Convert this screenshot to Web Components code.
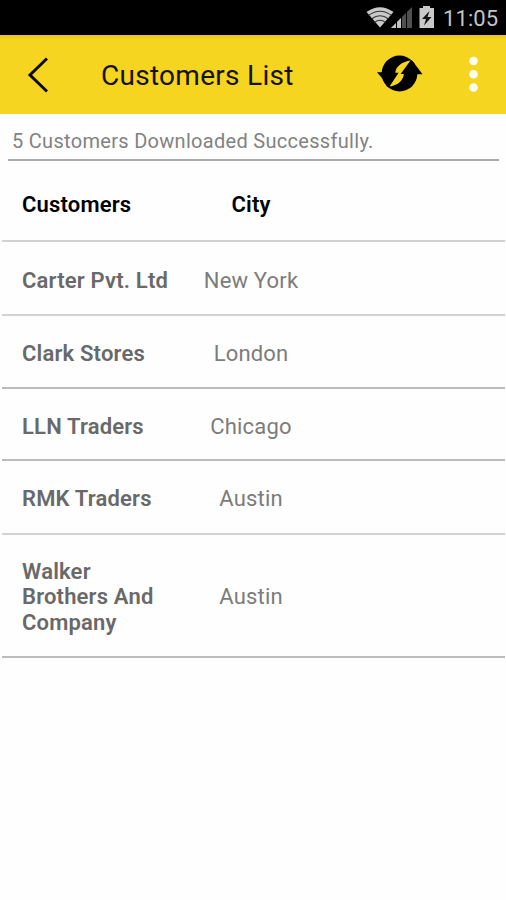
<!DOCTYPE html>
<html lang="en">
<head>
<meta charset="utf-8">
<title>Customers List</title>
<style>
html,body{margin:0;height:100%;background:#fefefe;font-family:Roboto,"Liberation Sans",sans-serif}
</style>
</head>
<body>
<customers-app></customers-app>
<script>
function define(name, html) {
  const t = document.createElement('template');
  t.innerHTML = html;
  customElements.define(name, class extends HTMLElement {
    constructor() {
      super();
      this.attachShadow({ mode: 'open' }).append(t.content.cloneNode(true));
    }
  });
}
define('status-bar', `
<style>
:host{display:flex;height:35px;background:#000;box-sizing:border-box;padding-right:8px;justify-content:flex-end;align-items:flex-start;color:#c4c4c4}
svg{display:block;flex:none}
span{font-size:22px;line-height:26px;margin:6px 0 0 7px;width:55px;white-space:nowrap;letter-spacing:.1px}
</style>
<svg width="70" height="35" viewBox="0 0 70 35">
  <path d="M.5 12Q14 2.500 27.500 12L14 27.500Z" fill="#c9c9c9"/>
  <g fill="none" stroke="#333" stroke-width="1.100"><path d="M2.500 15.400Q14 7 25.500 15.400"/><path d="M5.500 19Q14 12.500 22.500 19"/><path d="M8.500 22.400Q14 18 19.500 22.400"/></g>
  <path d="M25 28L46 7V28Z" fill="#505050"/>
  <path d="M25 28L35 18V28Z" fill="#c4c4c4"/>
  <g stroke="#000" stroke-width="1"><path d="M30.500 20V28M35.500 14V28M40.500 9V28"/></g>
  <path d="M53.500 8H57V6H64V8H68V28H53.500Z" fill="#c9c9c9"/>
  <path d="M63.500 11L56 19H60L58 25.500L65.500 17H61.500Z" fill="#111"/>
</svg>
<span>11:05</span>`);
define('app-bar', `
<style>
:host{display:flex;height:79px;background:linear-gradient(#e6c61b,#f5d51f 5px,#f5d51f);align-items:center;box-sizing:border-box;padding:0 27px}
svg{display:block;flex:none}
h1{margin:0 0 0 53px;font-weight:400;font-size:28px;line-height:34px;letter-spacing:.28px;color:#151200;width:275px;white-space:nowrap;position:relative;top:1px}
.dots{margin-left:46px}
</style>
<svg width="21" height="39" viewBox="0 0 21 39"><path d="M20 3.500L3 20L20 36.500" fill="none" stroke="#0c0a00" stroke-width="3"/></svg>
<h1><slot></slot></h1>
<svg width="47" height="39" viewBox="0 0 47 39">
  <circle cx="23.500" cy="18.500" r="17.900"/>
  <path d="M1 17.300H23L12 30Z"/>
  <path d="M46.500 19.300H25L36.500 6Z"/>
  <path d="M34.500 5.500C26.500 6.500 20 11 19.300 17.700H22.600L13.500 31.500C21.500 30.500 27 26 27.900 19H24.600Z" fill="#f5d51f"/>
</svg>
<svg class="dots" width="10" height="39" viewBox="0 0 10 39"><g fill="#fffef2"><circle cx="4.500" cy="6" r="4.300"/><circle cx="4.500" cy="19.200" r="4.300"/><circle cx="4.500" cy="32.500" r="4.300"/></g></svg>`);
define('status-note', `
<style>
:host{display:block;box-sizing:border-box;height:47px;margin:0 7px 0 8px;padding:0 0 0 4px;border-bottom:2px solid #aaa;color:#828282;font-size:20px;line-height:55px;letter-spacing:.3px;white-space:nowrap}
</style><slot></slot>`);
define('customer-row', `
<style>
:host{display:grid;grid-template-columns:150px 158px;align-items:center;box-sizing:border-box;margin:0 1px 0 2px;padding-left:20px;padding-top:4px;border-bottom:2px solid #bcbcbc;color:#696969;font-size:22px;line-height:25.300px;letter-spacing:.18px;height:73px}
:host([soft]){border-color:#d2d2d2}
:host([head]){color:#000;height:81px;padding-top:8px}
:host([first]){height:74px;padding-top:6px}
:host([third]){height:72px;padding-top:6px}
:host([fourth]){height:74px;padding-top:3px}
:host([tall]){height:123px;padding-top:3px}
.name{font-weight:600}
.city{text-align:center;color:#7c7c7c}
:host([head]) .city{font-weight:600;color:#000}
</style>
<div class="name"><slot name="name"></slot></div><div class="city"><slot name="city"></slot></div>`);
define('customers-app', `
<style>:host{display:block;width:506px;height:900px;overflow:hidden;background:#fefefe}</style>
<status-bar></status-bar>
<app-bar>Customers List</app-bar>
<status-note>5 Customers Downloaded Successfully.</status-note>
<customer-row head soft><span slot="name">Customers</span><span slot="city">City</span></customer-row>
<customer-row first soft><span slot="name">Carter Pvt. Ltd</span><span slot="city">New York</span></customer-row>
<customer-row><span slot="name">Clark Stores</span><span slot="city">London</span></customer-row>
<customer-row third><span slot="name">LLN Traders</span><span slot="city">Chicago</span></customer-row>
<customer-row fourth soft><span slot="name">RMK Traders</span><span slot="city">Austin</span></customer-row>
<customer-row tall><span slot="name">Walker<br>Brothers And<br>Company</span><span slot="city">Austin</span></customer-row>`);
</script>
</body>
</html>
